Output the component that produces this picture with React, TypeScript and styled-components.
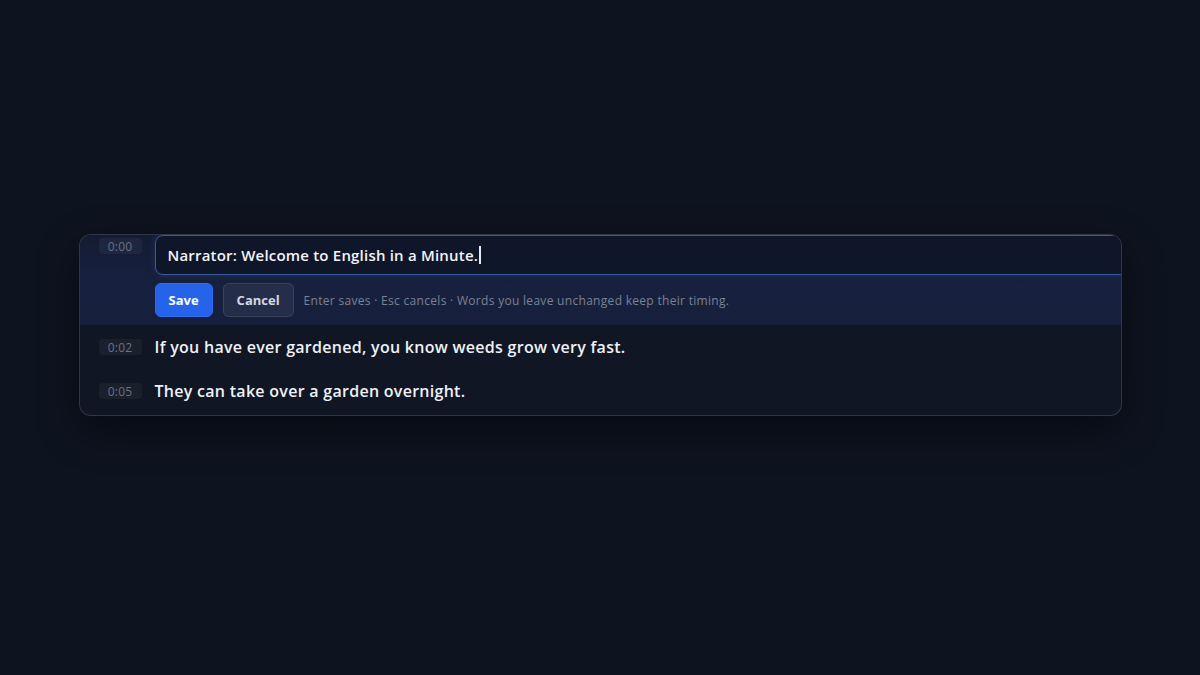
import React from 'react';
import styled, { createGlobalStyle } from 'styled-components';

interface Segment {
  time: string;
  text: string;
}

const GlobalStyle = createGlobalStyle`
  html, body {
    margin: 0;
    padding: 0;
    height: 100%;
    background: #0e1320;
  }

  #root {
    height: 100%;
  }
`;

const Page = styled.div`
  height: 675px;
  display: flex;
  align-items: flex-start;
  justify-content: center;
  padding-top: 234px;
  box-sizing: border-box;
  font-family: 'Open Sans', 'Liberation Sans', sans-serif;
`;

const Card = styled.div`
  width: 1043px;
  box-sizing: border-box;
  background-color: #111624;
  border: 1px solid rgba(255, 255, 255, 0.14);
  border-radius: 12px;
  overflow: hidden;
  box-shadow: 0 14px 40px rgba(0, 0, 0, 0.45);
  padding-bottom: 2px;
`;

const ActiveRow = styled.div`
  display: flex;
  align-items: flex-start;
  gap: 13px;
  padding: 0 0 8px 19px;
  background: linear-gradient(180deg, #141c34 0%, #17213f 60%, #16203c 100%);
`;

const Row = styled.div`
  display: flex;
  align-items: center;
  gap: 13px;
  padding: 12px 0 12px 19px;
`;

const Time = styled.span<{ $top?: number }>`
  flex: none;
  width: 43px;
  height: 16px;
  margin-top: ${props => props.$top ?? 0}px;
  display: flex;
  align-items: center;
  justify-content: center;
  border-radius: 4px;
  background-color: rgba(255, 255, 255, 0.045);
  color: #687186;
  font-size: 12px;
  font-weight: 500;
  letter-spacing: 0.2px;
`;

const EditColumn = styled.div`
  flex: 1;
  margin-right: -24px;
  display: flex;
  flex-direction: column;
  gap: 8px;
`;

const Input = styled.div`
  height: 40px;
  box-sizing: border-box;
  display: flex;
  align-items: center;
  padding: 0 12px;
  background-color: #10162a;
  border: 1.5px solid #3b5898;
  border-radius: 8px;
  box-shadow: 0 0 6px rgba(59, 88, 152, 0.35);
  color: #f2f4f8;
  font-size: 15px;
  font-weight: 600;
  letter-spacing: 0.2px;
`;

const Caret = styled.span`
  display: inline-block;
  width: 1.5px;
  height: 18px;
  margin-left: 1px;
  background-color: #e8ecf4;
`;

const Actions = styled.div`
  display: flex;
  align-items: center;
  gap: 10px;
`;

const ActionButton = styled.button<{ $primary?: boolean }>`
  height: 34px;
  padding: 0 13px;
  border-radius: 6px;
  border: 1px solid ${props => (props.$primary ? '#2f6bf0' : 'rgba(255, 255, 255, 0.1)')};
  background-color: ${props => (props.$primary ? '#2563eb' : 'rgba(255, 255, 255, 0.06)')};
  color: ${props => (props.$primary ? '#ffffff' : '#d4d8e0')};
  font-family: inherit;
  font-size: 13px;
  font-weight: 700;
  cursor: pointer;
`;

const Hint = styled.span`
  color: #7a8294;
  font-size: 12px;
  font-weight: 500;
  letter-spacing: 0.3px;
`;

const LineText = styled.span`
  color: #eef1f6;
  font-size: 16px;
  line-height: 20px;
  font-weight: 600;
  letter-spacing: 0.28px;
`;

const segments: Segment[] = [
  { time: '0:02', text: 'If you have ever gardened, you know weeds grow very fast.' },
  { time: '0:05', text: 'They can take over a garden overnight.' },
];

const App: React.FC = () => {
  return (
    <>
      <GlobalStyle />
      <Page>
        <Card>
          <ActiveRow>
            <Time $top={3}>0:00</Time>
            <EditColumn>
              <Input>
                Narrator: Welcome to English in a Minute.
                <Caret />
              </Input>
              <Actions>
                <ActionButton $primary>Save</ActionButton>
                <ActionButton>Cancel</ActionButton>
                <Hint>Enter saves · Esc cancels · Words you leave unchanged keep their timing.</Hint>
              </Actions>
            </EditColumn>
          </ActiveRow>
          {segments.map(segment => (
            <Row key={segment.time}>
              <Time>{segment.time}</Time>
              <LineText>{segment.text}</LineText>
            </Row>
          ))}
        </Card>
      </Page>
    </>
  );
};

export default App;
